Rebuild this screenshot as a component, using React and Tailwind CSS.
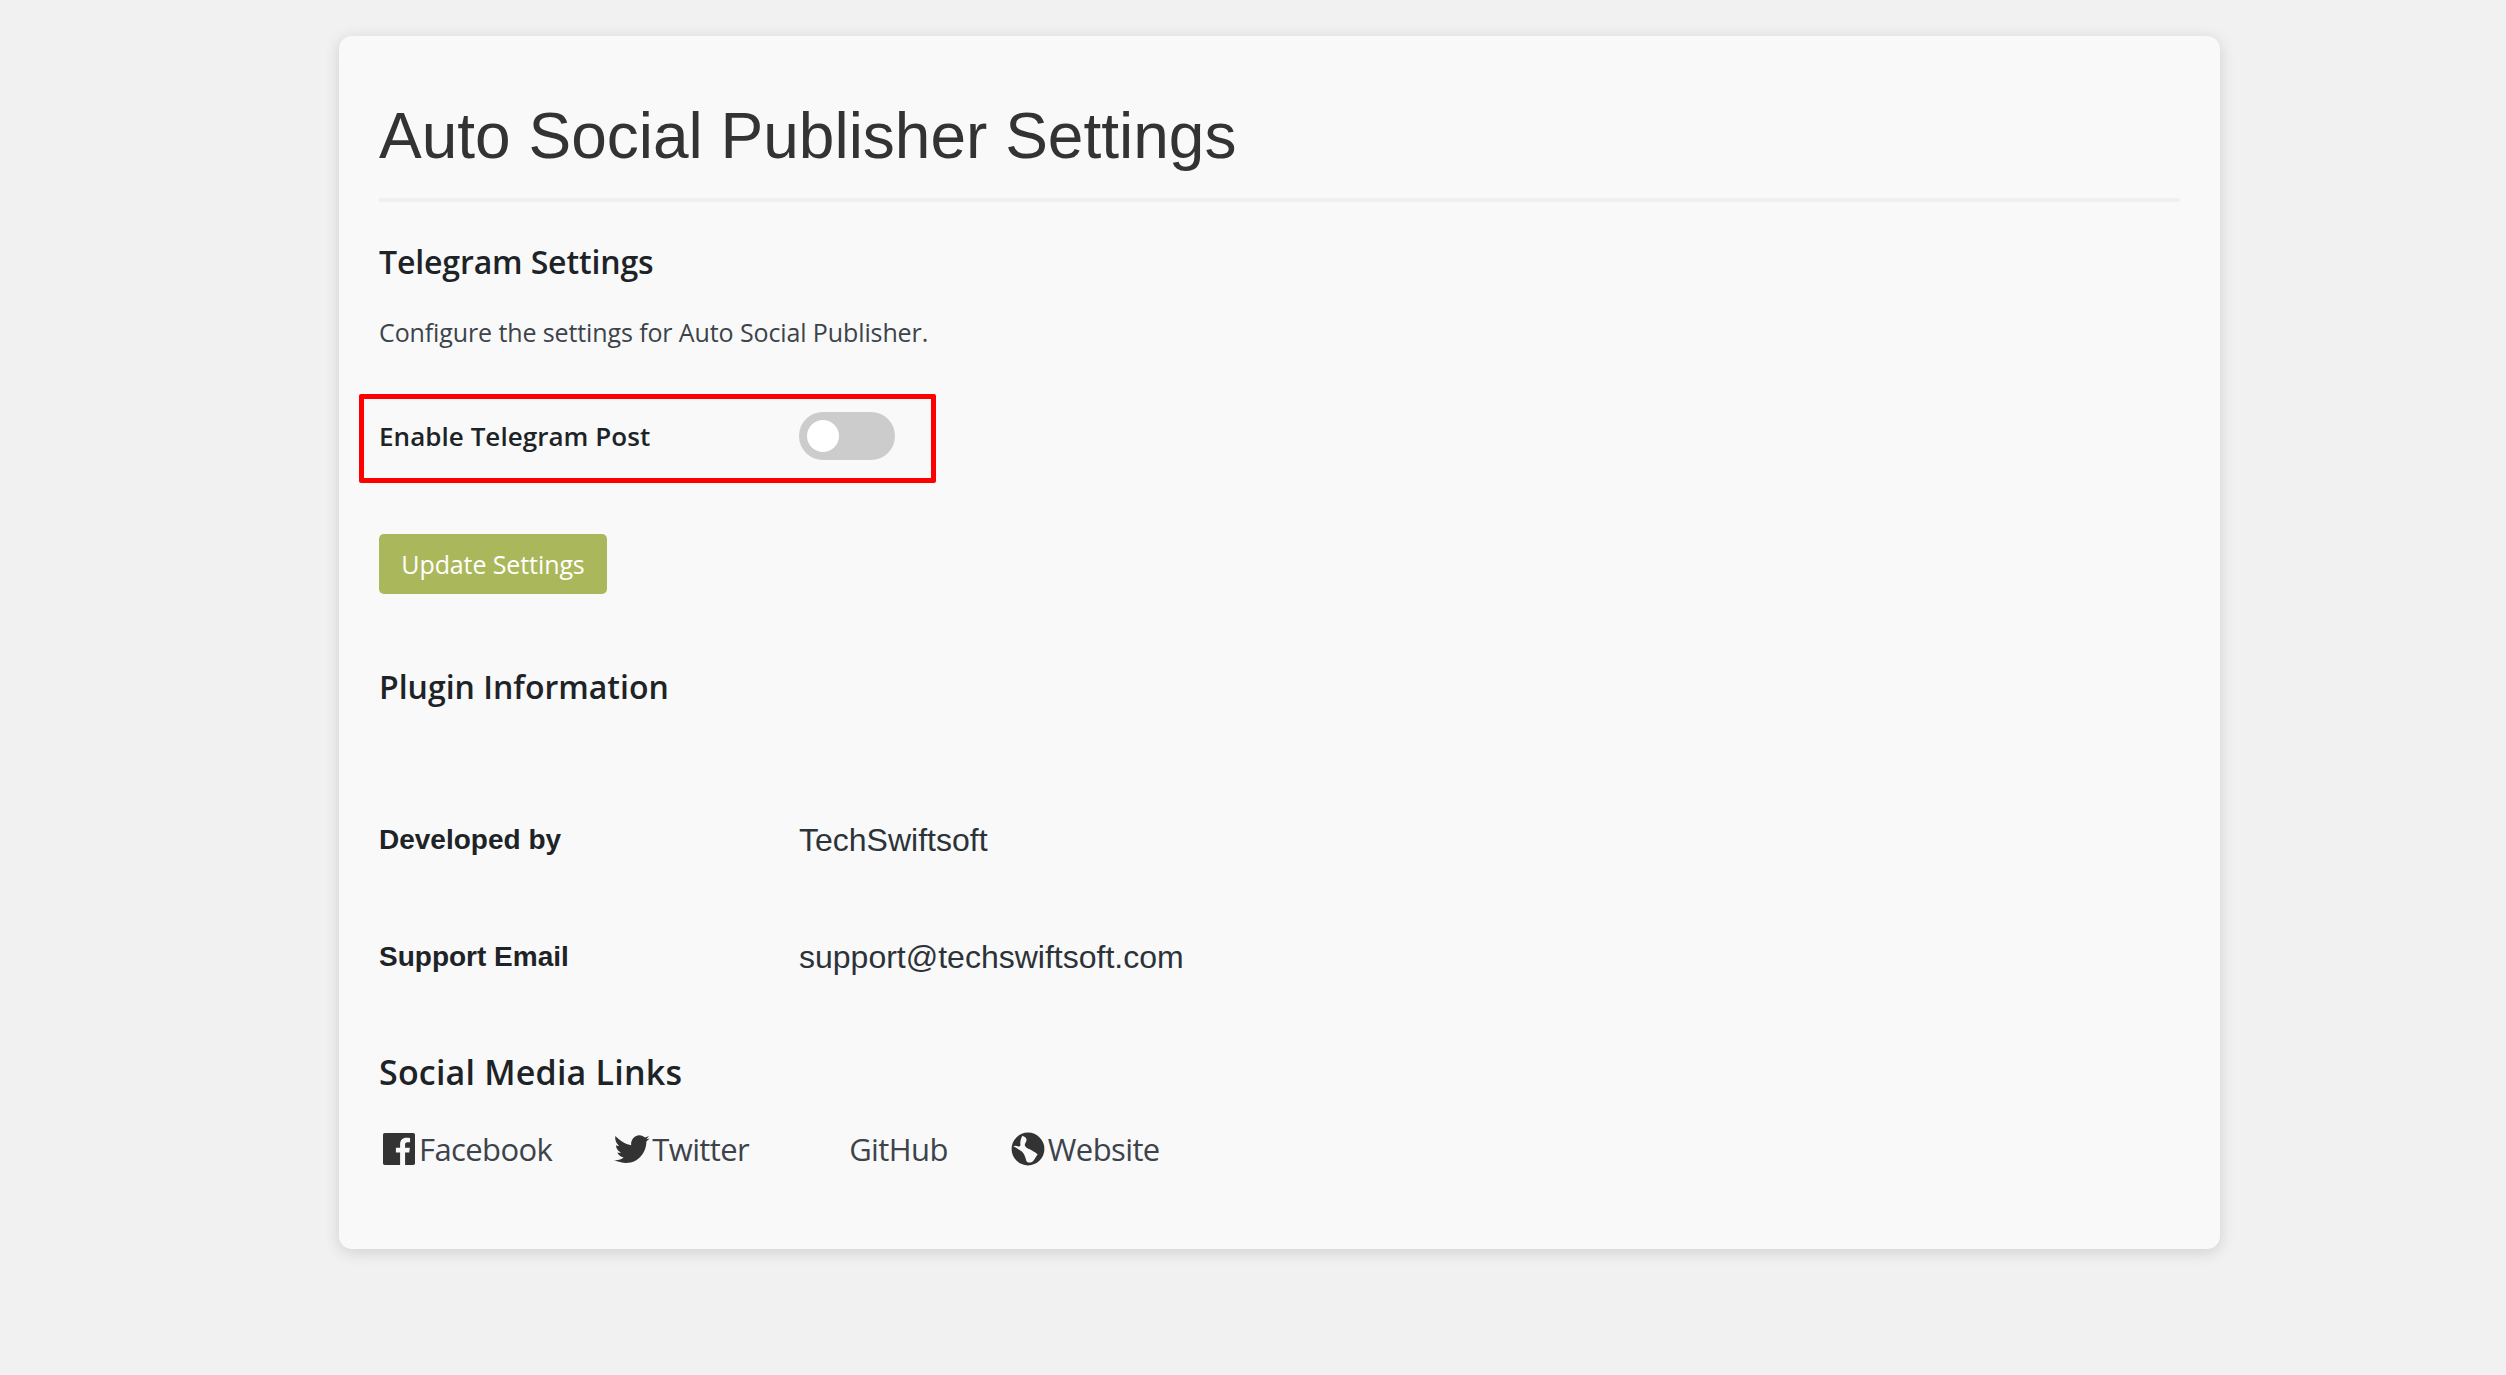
const SEGOE = 'font-["Open_Sans","Noto_Sans",sans-serif]';
const ARIAL = 'font-["Liberation_Sans",Arial,sans-serif]';

function FacebookIcon() {
  return (
    <svg viewBox="0 0 20 20" className="w-[40px] h-[40px]" fill="currentColor">
      <path d="M2.89 2h14.23c.49 0 .88.39.88.88v14.24c0 .48-.39.88-.88.88h-4.08v-6.2h2.08l.31-2.41h-2.39V7.85c0-.7.2-1.18 1.2-1.18h1.28V4.52c-.22-.03-.98-.09-1.86-.09-1.85 0-3.11 1.12-3.11 3.19v1.77H8.46v2.41h2.09V18H2.89c-.49 0-.89-.4-.89-.88V2.88c0-.49.4-.88.89-.88z" />
    </svg>
  );
}

function TwitterIcon() {
  return (
    <svg viewBox="15 22 115 95" className="w-[38px] h-[32px]" fill="currentColor">
      <path d="M22 30C40 48 55 55 70 58C68 45 78 28 95 28C102 28 108 32 112 35L124 30L116 40L126 38L116 47C116 80 92 112 55 112C42 112 30 108 18 103C30 104 40 101 47 95C38 93 32 88 28 80C32 81 36 81 39 80C30 75 24 68 24 58C27 60 31 61 33 60C25 52 20 42 22 30Z" />
    </svg>
  );
}

function GlobeIcon() {
  return (
    <svg viewBox="0 0 20 20" className="w-[40px] h-[40px]" fill="currentColor">
      <path fillRule="evenodd" d="M10 1.8a8.2 8.2 0 1 1 0 16.4 8.2 8.2 0 0 1 0-16.4zM7.2 3.4C8.4 3.8 9.6 4.6 9.2 5.9C8.9 7 8 7.6 8.6 8.6C9.3 9.8 11 10 12 10.8C13 11.6 14 11.8 14.8 12.8C14 13.6 13.6 15 12.6 16C11.5 17 9.8 17 9.2 16C8.8 14.6 8.4 13 7.6 12C6.8 11 5.6 10.6 4.6 9.8C3.9 9.2 3.2 9 2.6 8.8C3.2 8.2 4 8.2 4.8 8.6C5.6 9 6.4 8.4 6.2 7.6C6 6.6 6.4 4.8 7.2 3.4z" />
    </svg>
  );
}

const LINKS = [
  { label: 'Facebook', icon: <FacebookIcon /> },
  { label: 'Twitter', icon: <TwitterIcon /> },
  { label: 'GitHub', icon: null },
  { label: 'Website', icon: <GlobeIcon /> },
];

function InfoRow({ label, value }) {
  return (
    <div className="flex items-center h-[117px]">
      <div className="w-[420px] text-[28px] font-bold text-[#1d2327]">{label}</div>
      <div className="text-[32px] text-[#2c3338]">{value}</div>
    </div>
  );
}

export default function App() {
  return (
    <div className={`min-h-[1375px] bg-[#f1f1f1] pt-[36px] pl-[339px] ${ARIAL}`}>
      <div className="w-[1881px] h-[1213px] rounded-[13px] bg-[#f9f9f9] px-[40px] shadow-[0_3px_16px_rgba(0,0,0,0.14)]">
        <h1 className="pt-[63px] pb-[24px] border-b-[4px] border-[#f0f0f0] text-[64px] leading-[75px] text-[#333333]">
          Auto Social Publisher Settings
        </h1>

        <div className={SEGOE}>
          <h2 className="mt-[39px] text-[32px] leading-[42px] font-semibold tracking-[-0.13px] text-[#1d2327]">Telegram Settings</h2>
          <p className="mt-[31px] text-[25px] leading-[36px] tracking-[-0.11px] text-[#3c434a]">Configure the settings for Auto Social Publisher.</p>

          <div className="mt-[44px] -ml-[20px] w-[577px] h-[89px] rounded-[2px] border-[5px] border-[#ff0000] pl-[15px] pb-[5px] flex items-center">
            <div className="w-[420px] text-[26px] font-semibold tracking-[0.05px] text-[#1d2327]">Enable Telegram Post</div>
            <div className="w-[96px] h-[48px] rounded-full bg-[#cccccc] flex items-center pl-[8px]">
              <div className="w-[32px] h-[32px] rounded-full bg-white" />
            </div>
          </div>

          <button className="mt-[51px] block w-[228px] h-[60px] rounded-[5px] bg-[#abb75b] pt-[1px] text-[25px] tracking-[-0.1px] text-white">
            Update Settings
          </button>

          <h2 className="mt-[72px] text-[32px] leading-[42px] font-semibold text-[#1d2327]">Plugin Information</h2>
        </div>

        <div className="mt-[73px]">
          <InfoRow label="Developed by" value="TechSwiftsoft" />
          <InfoRow label="Support Email" value="support@techswiftsoft.com" />
        </div>

        <div className={SEGOE}>
          <h2 className="mt-[36px] text-[34px] leading-[42px] font-semibold tracking-[0.2px] text-[#1d2327]">Social Media Links</h2>
          <div className="mt-[34px] flex gap-[60px] text-[31px] leading-[44px] tracking-[-0.6px] text-[#3c434a]">
            {LINKS.map(l => (
              <a key={l.label} className="flex items-center">
                <span className="w-[40px] flex justify-center text-[#333333]">{l.icon}</span>
                {l.label}
              </a>
            ))}
          </div>
        </div>
      </div>
    </div>
  );
}
